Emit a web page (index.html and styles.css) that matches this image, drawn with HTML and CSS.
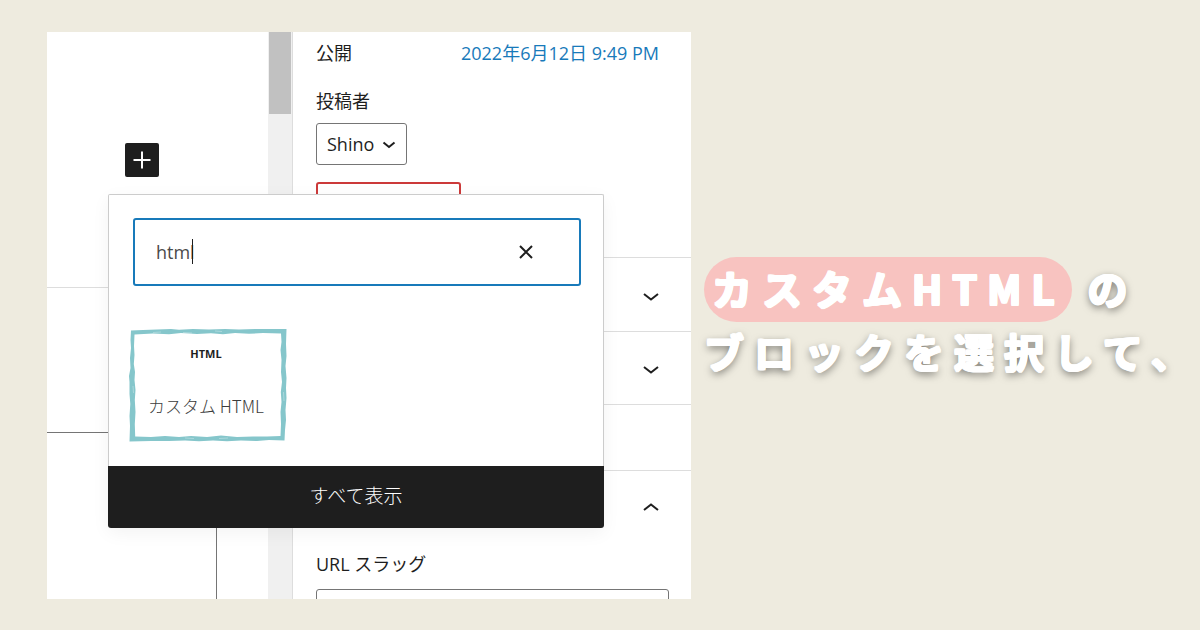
FILE: index.html
```html
<!DOCTYPE html>
<html lang="ja">
<head>
<meta charset="utf-8">
<meta name="viewport" content="width=device-width, initial-scale=1">
<title>カスタムHTML のブロックを選択して、</title>
<link rel="stylesheet" href="styles.css">
</head>
<body>
<main class="slide">
  <section class="editor">
    <div class="canvas">
      <div class="canvas-block canvas-block--insert">
        <button class="add" type="button" aria-label="ブロックを追加">
          <svg viewBox="0 0 34 34" aria-hidden="true"><path d="M17 8.500v17M8.500 17h17"/></svg>
        </button>
      </div>
      <div class="canvas-block canvas-block--middle"></div>
      <div class="canvas-block canvas-block--column"></div>
    </div>
    <div class="scrollbar"><div class="thumb"></div></div>

    <aside class="sidebar">
      <div class="status">
        <div class="row"><span>公開</span><a class="date" href="#">2022年6月12日 9:49 PM</a></div>
        <label class="author-label" for="author">投稿者</label>
        <div class="select-wrap">
          <select id="author"><option>Shino</option></select>
          <svg class="select-arrow" viewBox="0 0 16 10" aria-hidden="true"><path d="M2.500 2.500 8 7l5.500-4.500"/></svg>
        </div>
        <button class="trash" type="button" aria-label="ゴミ箱へ移動"></button>
      </div>
      <button class="panel panel--first" type="button" aria-label="パネルを開く"><svg viewBox="0 0 20 12" aria-hidden="true"><path d="m3 3 7 5.500L17 3"/></svg></button>
      <button class="panel" type="button" aria-label="パネルを開く"><svg viewBox="0 0 20 12" aria-hidden="true"><path d="m3 3 7 5.500L17 3"/></svg></button>
      <div class="panel panel--empty"></div>
      <button class="panel panel--open" type="button" aria-label="パネルを閉じる"><svg viewBox="0 0 20 12" aria-hidden="true"><path d="m3 9 7-5.500L17 9"/></svg></button>
      <div class="slug">
        <label for="slug">URL スラッグ</label>
        <input id="slug" type="text">
      </div>
    </aside>

    <div class="inserter">
      <div class="inserter-body">
        <div class="search">
          <input type="text" value="html" aria-label="検索">
          <span class="caret"></span>
          <button class="clear" type="button" aria-label="検索をリセット">
            <svg viewBox="0 0 16 16" aria-hidden="true"><path d="m2 2 12 12M14 2 2 14"/></svg>
          </button>
        </div>
        <button class="block" type="button">
          <svg class="brush" viewBox="0 0 158 114" aria-hidden="true">
            <path fill-rule="evenodd" d="M2 2.500 L14 2 L28 1.500 L42 1 L50 1.800 L64 1 L80 1.500 L96 1 L110 1.500 L126 1 L157.500 1 L157 16 L157.500 28 L156.500 38 L157.500 50 L157 60 L157.500 70 L156.500 82 L157 92 L156 102 L155.500 112.500 L140 112 L128 113 L112 112.500 L98 113.300 L84 112.500 L70 113.300 L56 112.500 L40 113 L22 113 L.5 113.500 L1 98 L.500 88 L1.300 76 L.5 66 L.5 54 L0 48 L1.500 40 L1 30 L2 20 L1.500 12Z
            M5.500 6.500 L5 18 L5.500 27 L4.800 36 L6 44 L5.500 52 L6.500 62 L5.800 72 L6.500 84 L5.800 96 L6.200 108.500 L22 109 L36 108 L50 109 L62 108 L78 109 L92 107.500 L108 109 L124 108.500 L138 108.500 L151.500 108 L152 96 L151.500 84 L152.500 74 L151.800 64 L153 54 L152 44 L152.500 32 L151.500 22 L152.500 14 L152 5.500 L134 5 L120 5.800 L106 5 L94 6.200 L82 5.300 L68 6 L52 5 L40 6.200 L24 5.500Z"/>
            <path class="brush-grain" d="M24 4.500 32 4M54 4.500 63 5M86 3 93 3.500M4 58 4.500 65M154.500 64 155 73M56 110 65 110.500M90 110.500 99 110"/>
          </svg>
          <span class="block-icon">HTML</span>
          <span class="block-name">カスタム HTML</span>
        </button>
      </div>
      <button class="show-all" type="button">すべて表示</button>
    </div>
  </section>

  <h1 class="caption"><mark>カスタムHTML</mark><span>の</span><br>ブロックを選択して、</h1>
</main>
</body>
</html>
```
FILE: styles.css
```css
* { box-sizing: border-box; }

body {
  margin: 0;
  background: #eeebdf;
  color: #1e1e1e;
  font: 18px/24px "Open Sans", "Noto Sans CJK JP", sans-serif;
}

button, input, select { font: inherit; color: inherit; }
button { cursor: pointer; }

svg { display: block; fill: none; stroke: #1e1e1e; stroke-width: 2; }

.slide {
  display: grid;
  grid-template-columns: minmax(0, 644fr) minmax(0, 484fr);
  grid-template-rows: minmax(0, 1fr);
  column-gap: 13px;
  height: 100vh;
  padding: 32px 12px 31px 47px;
}

.editor {
  position: relative;
  display: flex;
  overflow: hidden;
  background: #fff;
}

.canvas { flex: 0 0 221px; display: flex; flex-direction: column; }
.canvas-block--insert { height: 256px; padding: 111px 78px; border-bottom: 1px solid #ddd; }
.canvas-block--middle { height: 145px; border-bottom: 1px solid #757575; }
.canvas-block--column { flex: 1; width: 170px; border-right: 1px solid #757575; }

.add {
  display: block;
  width: 34px;
  height: 34px;
  padding: 0;
  border: 0;
  border-radius: 2px;
  background: #1e1e1e;
}
.add svg { stroke: #fff; }

.scrollbar { flex: 0 0 25px; background: #f0f0f0; border-right: 1px solid #ddd; }
.thumb { width: 22px; height: 82px; margin-left: 1px; background: #c1c1c1; }

.sidebar { flex: 1; min-width: 0; }
.status { height: 225px; padding: 9px 32px 0 23px; }
.row { display: flex; justify-content: space-between; }
.date { color: #187aba; text-decoration: none; }
.author-label { display: block; margin-top: 24px; }

.select-wrap { position: relative; width: 91px; margin-top: 10px; }
.select-wrap select {
  display: block;
  width: 100%;
  height: 42px;
  padding: 0 10px;
  border: 1px solid #757575;
  border-radius: 3px;
  background: #fff;
  appearance: none;
}
.select-arrow { position: absolute; right: 10px; top: 17px; width: 16px; height: 10px; pointer-events: none; }

.trash {
  display: block;
  width: 145px;
  height: 42px;
  margin-top: 17px;
  border: 2px solid #cc3a3a;
  border-radius: 3px;
  background: #fff;
}

.panel {
  display: flex;
  align-items: center;
  justify-content: flex-end;
  width: 100%;
  height: 73px;
  padding: 4px 30px 0;
  border: 0;
  border-top: 1px solid #ddd;
  background: #fff;
}
.panel--first { height: 74px; }
.panel--empty { height: 66px; }
.panel--open { padding-top: 0; }
.panel svg { width: 20px; height: 12px; }

.slug { padding: 9px 22px 0 23px; }
.slug label { display: block; }
.slug input {
  display: block;
  width: 100%;
  height: 42px;
  margin-top: 13px;
  border: 1px solid #757575;
  border-radius: 3px;
}

.inserter {
  position: absolute;
  left: 61px;
  top: 162px;
  width: 496px;
  border-radius: 2px;
  background: #fff;
  box-shadow: 0 5px 18px rgb(0 0 0 / 5%);
}
.inserter-body {
  height: 272px;
  padding: 23px 21px;
  border: 1px solid #ccc;
  border-bottom: 0;
  border-radius: 2px 2px 0 0;
}

.search { position: relative; margin: 0 1px 0 3px; }
.search input {
  display: block;
  width: 100%;
  height: 68px;
  padding: 0 21px;
  border: 2px solid #187aba;
  border-radius: 3px;
  outline: 0;
  color: #4a4a4a;
}
.caret { position: absolute; left: 59px; top: 21px; width: 1px; height: 25px; background: #1e1e1e; }
.clear { position: absolute; right: 47px; top: 26px; padding: 0; border: 0; background: none; }
.clear svg { width: 16px; height: 16px; }

.block {
  position: relative;
  display: flex;
  flex-direction: column;
  align-items: center;
  width: 158px;
  height: 114px;
  margin-top: 42px;
  margin-left: -1px;
  padding: 14px 4px 0 0;
  border: 0;
  background: none;
}
.brush { position: absolute; inset: 0; width: 100%; height: 100%; fill: #85c6cb; stroke: none; }
.brush-grain { fill: none; stroke: #fff; stroke-width: 1; opacity: 0.3; }
.block-icon { font: 700 11px/24px "Open Sans", sans-serif; }
.block-name { margin-top: 28px; color: #3c3c3c; font-size: 17px; font-family: "Noto Sans CJK JP", sans-serif; font-weight: 300; }

.show-all {
  display: block;
  width: 100%;
  height: 62px;
  padding: 0 0 3px;
  border: 0;
  border-radius: 0 0 3px 3px;
  background: #1e1e1e;
  color: #fff;
  font-size: 19px;
  font-weight: 300;
}

.caption {
  align-self: center;
  margin: 0;
  padding-top: 8px;
  color: #fff;
  font: 700 40px/63px "Noto Sans CJK JP", sans-serif;
  letter-spacing: 10px;
  white-space: nowrap;
  text-shadow:
    1px 0 #fff, -1px 0 #fff, 0 1px #fff, 0 -1px #fff,
    1px 1px #fff, -1px 1px #fff, 1px -1px #fff, -1px -1px #fff,
    0 3px 8px rgb(0 0 0 / 60%);
}
.caption mark {
  margin-right: 16px;
  padding: 2px 7px 5px 8px;
  border-radius: 33px;
  background: #f8c3c0;
  color: inherit;
  text-shadow:
    1px 0 #fff, -1px 0 #fff, 0 1px #fff, 0 -1px #fff,
    1px 1px #fff, -1px 1px #fff, 1px -1px #fff, -1px -1px #fff;
}
```
